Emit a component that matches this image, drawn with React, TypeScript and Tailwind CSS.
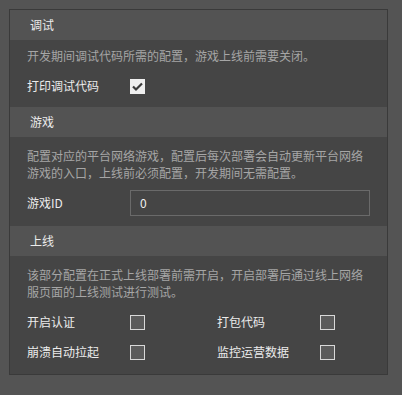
import React from "react";

const font = { fontFamily: '"Noto Sans CJK SC", "Noto Sans", sans-serif' };

function Header({ title }: { title: string }) {
  return (
    <div className="h-[30px] flex items-center pl-[20px] bg-[#535353] text-[12px] text-[#ececec]">
      {title}
    </div>
  );
}

function Box({ checked }: { checked?: boolean }) {
  if (checked) {
    return (
      <div className="w-[15px] h-[15px] bg-[#efefef] flex items-center justify-center">
        <svg width="13" height="13" viewBox="0 0 13 13">
          <path d="M2 6.5 L5 9.5 L11 3.5" fill="none" stroke="#3a3a3a" strokeWidth="2.2" />
        </svg>
      </div>
    );
  }
  return <div className="w-[15px] h-[15px] bg-[#5b5b5b] border border-[#d8d8d8]" />;
}

function CheckItem({ label, checked }: { label: string; checked?: boolean }) {
  return (
    <div className="flex items-center h-[20px]">
      <div className="w-[103px] text-[12px] text-[#ececec]">{label}</div>
      <Box checked={checked} />
    </div>
  );
}

export default function App() {
  return (
    <div className="w-[402px] h-[395px] bg-[#545454] pt-[9px] pl-[9px]" style={font}>
      <div className="w-[379px] border border-[#3a3a3a]">
        <Header title="调试" />
        <div className="h-[67px] bg-[#454545] pl-[17px] pr-[17px] pt-[7px]">
          <div className="text-[12px] leading-[17px] text-[#a6a6a6]">
            开发期间调试代码所需的配置，游戏上线前需要关闭。
          </div>
          <div className="mt-[12px]">
            <CheckItem label="打印调试代码" checked />
          </div>
        </div>
        <Header title="游戏" />
        <div className="h-[89px] bg-[#454545] pl-[17px] pr-[17px] pt-[10px]">
          <div className="text-[12px] leading-[17px] text-[#a6a6a6]">
            配置对应的平台网络游戏，配置后每次部署会自动更新平台网络游戏的入口，上线前必须配置，开发期间无需配置。
          </div>
          <div className="mt-[9px] flex items-center h-[26px]">
            <div className="w-[103px] text-[12px] text-[#ececec]">游戏ID</div>
            <div className="w-[240px] h-[26px] border border-[#6a6a6a] flex items-center pl-[9px] text-[12px] text-[#f0f0f0]">
              0
            </div>
          </div>
        </div>
        <Header title="上线" />
        <div className="h-[118px] bg-[#454545] pl-[17px] pr-[17px] pt-[10px]">
          <div className="text-[12px] leading-[17px] text-[#a6a6a6]">
            该部分配置在正式上线部署前需开启，开启部署后通过线上网络服页面的上线测试进行测试。
          </div>
          <div className="mt-[12px] grid grid-cols-[190px_150px] gap-y-[10px]">
            <CheckItem label="开启认证" />
            <CheckItem label="打包代码" />
            <CheckItem label="崩溃自动拉起" />
            <CheckItem label="监控运营数据" />
          </div>
        </div>
      </div>
    </div>
  );
}
